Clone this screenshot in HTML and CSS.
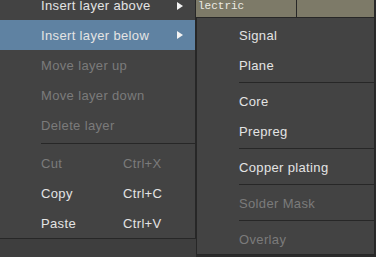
FILE: index.html
```html
<!DOCTYPE html>
<html>
<head>
    <meta charset="utf-8">
    <title>Layer menu</title>
    <link rel="stylesheet" href="styles.css">
</head>
<body>
<div class="screen">
    <div class="menu main">
        <div class="item">Insert layer above<span class="arrow"></span></div>
        <div class="item active">Insert layer below<span class="arrow"></span></div>
        <div class="item disabled">Move layer up</div>
        <div class="item disabled">Move layer down</div>
        <div class="item disabled">Delete layer</div>
        <div class="sep"></div>
        <div class="item disabled"><span class="label">Cut</span><span>Ctrl+X</span></div>
        <div class="item"><span class="label">Copy</span><span>Ctrl+C</span></div>
        <div class="item"><span class="label">Paste</span><span>Ctrl+V</span></div>
    </div>
    <div class="side">
        <div class="cells">
            <div class="cell">lectric</div>
            <div class="cell"></div>
        </div>
        <div class="menu sub">
            <div class="item">Signal</div>
            <div class="item">Plane</div>
            <div class="sep"></div>
            <div class="item">Core</div>
            <div class="item">Prepreg</div>
            <div class="sep"></div>
            <div class="item">Copper plating</div>
            <div class="sep"></div>
            <div class="item disabled">Solder Mask</div>
            <div class="sep"></div>
            <div class="item disabled">Overlay</div>
        </div>
    </div>
</div>
</body>
</html>
```

FILE: styles.css
```css
:root {
    --menu-color: #434343;
    --border-color: #272727;
    --text-color: #e4e4e4;
    --disabled-color: #7b7b7b;
    --highlight-color: #5f82a2;
    --cell-color: #7d7a68;
}

html, body {
    margin: 0;
    padding: 0;
    width: 376px;
    height: 257px;
    overflow: hidden;
}

body {
    background-color: #3e3e3e;
    font-family: "Liberation Sans", Arial, sans-serif;
    font-size: 13px;
    letter-spacing: 0.35px;
    color: var(--text-color);
}

.screen {
    display: flex;
    height: 257px;
}

.menu {
    background-color: var(--menu-color);
    display: flex;
    flex-direction: column;
}

.main {
    width: 195px;
    margin-top: -9px;
    align-self: flex-start;
    border-right: 1px solid var(--border-color);
    border-bottom: 1px solid var(--border-color);
}

.item {
    display: flex;
    align-items: center;
    height: 30px;
    padding-left: 41px;
    white-space: nowrap;
}

.main .item:first-child {
    height: 29px;
}

.item.active {
    background-color: var(--highlight-color);
}

.item.disabled {
    color: var(--disabled-color);
}

.label {
    width: 82px;
}

.arrow {
    margin-left: auto;
    margin-right: 12px;
    width: 0;
    height: 0;
    border-left: 6px solid #f4f4f4;
    border-top: 4px solid transparent;
    border-bottom: 4px solid transparent;
}

.sep {
    height: 1px;
    margin: 3px 0 4px 41px;
    background-color: var(--border-color);
}

.side {
    flex: 1;
    display: flex;
    flex-direction: column;
    background-color: #2a2a2a;
}

.cells {
    display: flex;
    height: 17px;
}

.cell {
    background-color: var(--cell-color);
    color: #ecebe4;
    font-family: "Liberation Mono", "Courier New", monospace;
    font-size: 11px;
    letter-spacing: 0;
    line-height: 13px;
    padding-left: 2px;
    overflow: hidden;
    flex: 1;
}

.cell:first-child {
    flex: none;
    width: 98px;
    border-right: 1px solid var(--border-color);
}

.cell:last-child {
    margin-right: 2px;
}

.sub {
    width: 177px;
    border: 1px solid var(--border-color);
    padding-top: 2px;
}

.sub .item {
    padding-left: 42px;
}

.sub .sep {
    margin: 2px 0 3px 42px;
}
```
